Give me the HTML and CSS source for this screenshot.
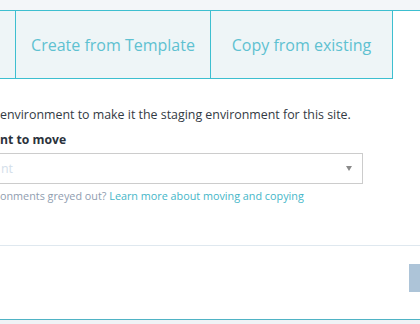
FILE: index.html
```
<!DOCTYPE html>
<html>
<head>
<meta charset="utf-8">
<link rel="stylesheet" href="styles.css">
</head>
<body>
<div class="page">
  <div class="topband"></div>
  <div class="tabs">
    <div class="tab tab-first"></div>
    <div class="tab tab-template">Create from Template</div>
    <div class="tab tab-copy">Copy from existing</div>
  </div>
  <div class="content">
    <p class="intro">environment to make it the staging environment for this site.</p>
    <div class="label">nt to move</div>
    <div class="select">
      <span class="placeholder">nt</span>
      <span class="arrow"></span>
    </div>
    <p class="help">onments greyed out? <a class="link">Learn more about moving and copying</a></p>
  </div>
  <div class="footer">
    <div class="button"></div>
  </div>
  <div class="bottomband"></div>
</div>
</body>
</html>
```
FILE: styles.css
```
html, body {
  margin: 0;
  padding: 0;
  background: #ffffff;
}
body {
  font-family: "Open Sans", "Liberation Sans", sans-serif;
  color: #333a44;
  overflow: hidden;
}
.page {
  width: 420px;
  height: 324px;
  overflow: hidden;
  display: flex;
  flex-direction: column;
}
.topband {
  height: 10px;
  background: #f3f6f9;
  flex: none;
}
.tabs {
  flex: none;
  display: flex;
  border-top: 1px solid #3dbfd0;
}
.tab {
  height: 67px;
  background: #eef5f7;
  border-bottom: 1px solid #3dbfd0;
  border-right: 1px solid #3dbfd0;
  display: flex;
  align-items: center;
  justify-content: center;
  font-size: 16px;
  color: #5ec1d1;
  white-space: nowrap;
}
.tab-first { width: 15px; }
.tab-template { width: 194px; }
.tab-copy { width: 181px; }
.content {
  flex: none;
}
.intro {
  margin: 27px 0 0 0;
  font-size: 12.4px;
  line-height: 18px;
  white-space: nowrap;
}
.label {
  margin-top: 7px;
  font-size: 12.2px;
  font-weight: 700;
  line-height: 18px;
  color: #2b323b;
}
.select {
  margin-top: 4px;
  margin-left: -20px;
  height: 29px;
  border: 1px solid #cccccc;
  display: flex;
  align-items: center;
  justify-content: space-between;
  padding-left: 20px;
  padding-right: 10px;
  box-sizing: content-box;
  width: 351px;
}
.placeholder {
  font-size: 12.4px;
  color: #d3deea;
}
.arrow {
  width: 0;
  height: 0;
  border-left: 3.5px solid transparent;
  border-right: 3.5px solid transparent;
  border-top: 5px solid #8a8a8a;
}
.help {
  margin: 4px 0 0 0;
  font-size: 10.8px;
  line-height: 15px;
  color: #8f9db0;
  white-space: nowrap;
}
.link {
  color: #44b6c8;
}
.footer {
  margin-top: 42px;
  flex: 1;
  border-top: 1px solid #dfe8ef;
  display: flex;
  justify-content: flex-end;
  align-items: flex-start;
  padding-top: 18px;
}
.button {
  width: 80px;
  height: 28px;
  background: #adc4d8;
  margin-right: -69px;
  flex: none;
}
.bottomband {
  flex: none;
  height: 4px;
  border-top: 1px solid #4fb3c5;
  background: #f0f3f6;
}
```
